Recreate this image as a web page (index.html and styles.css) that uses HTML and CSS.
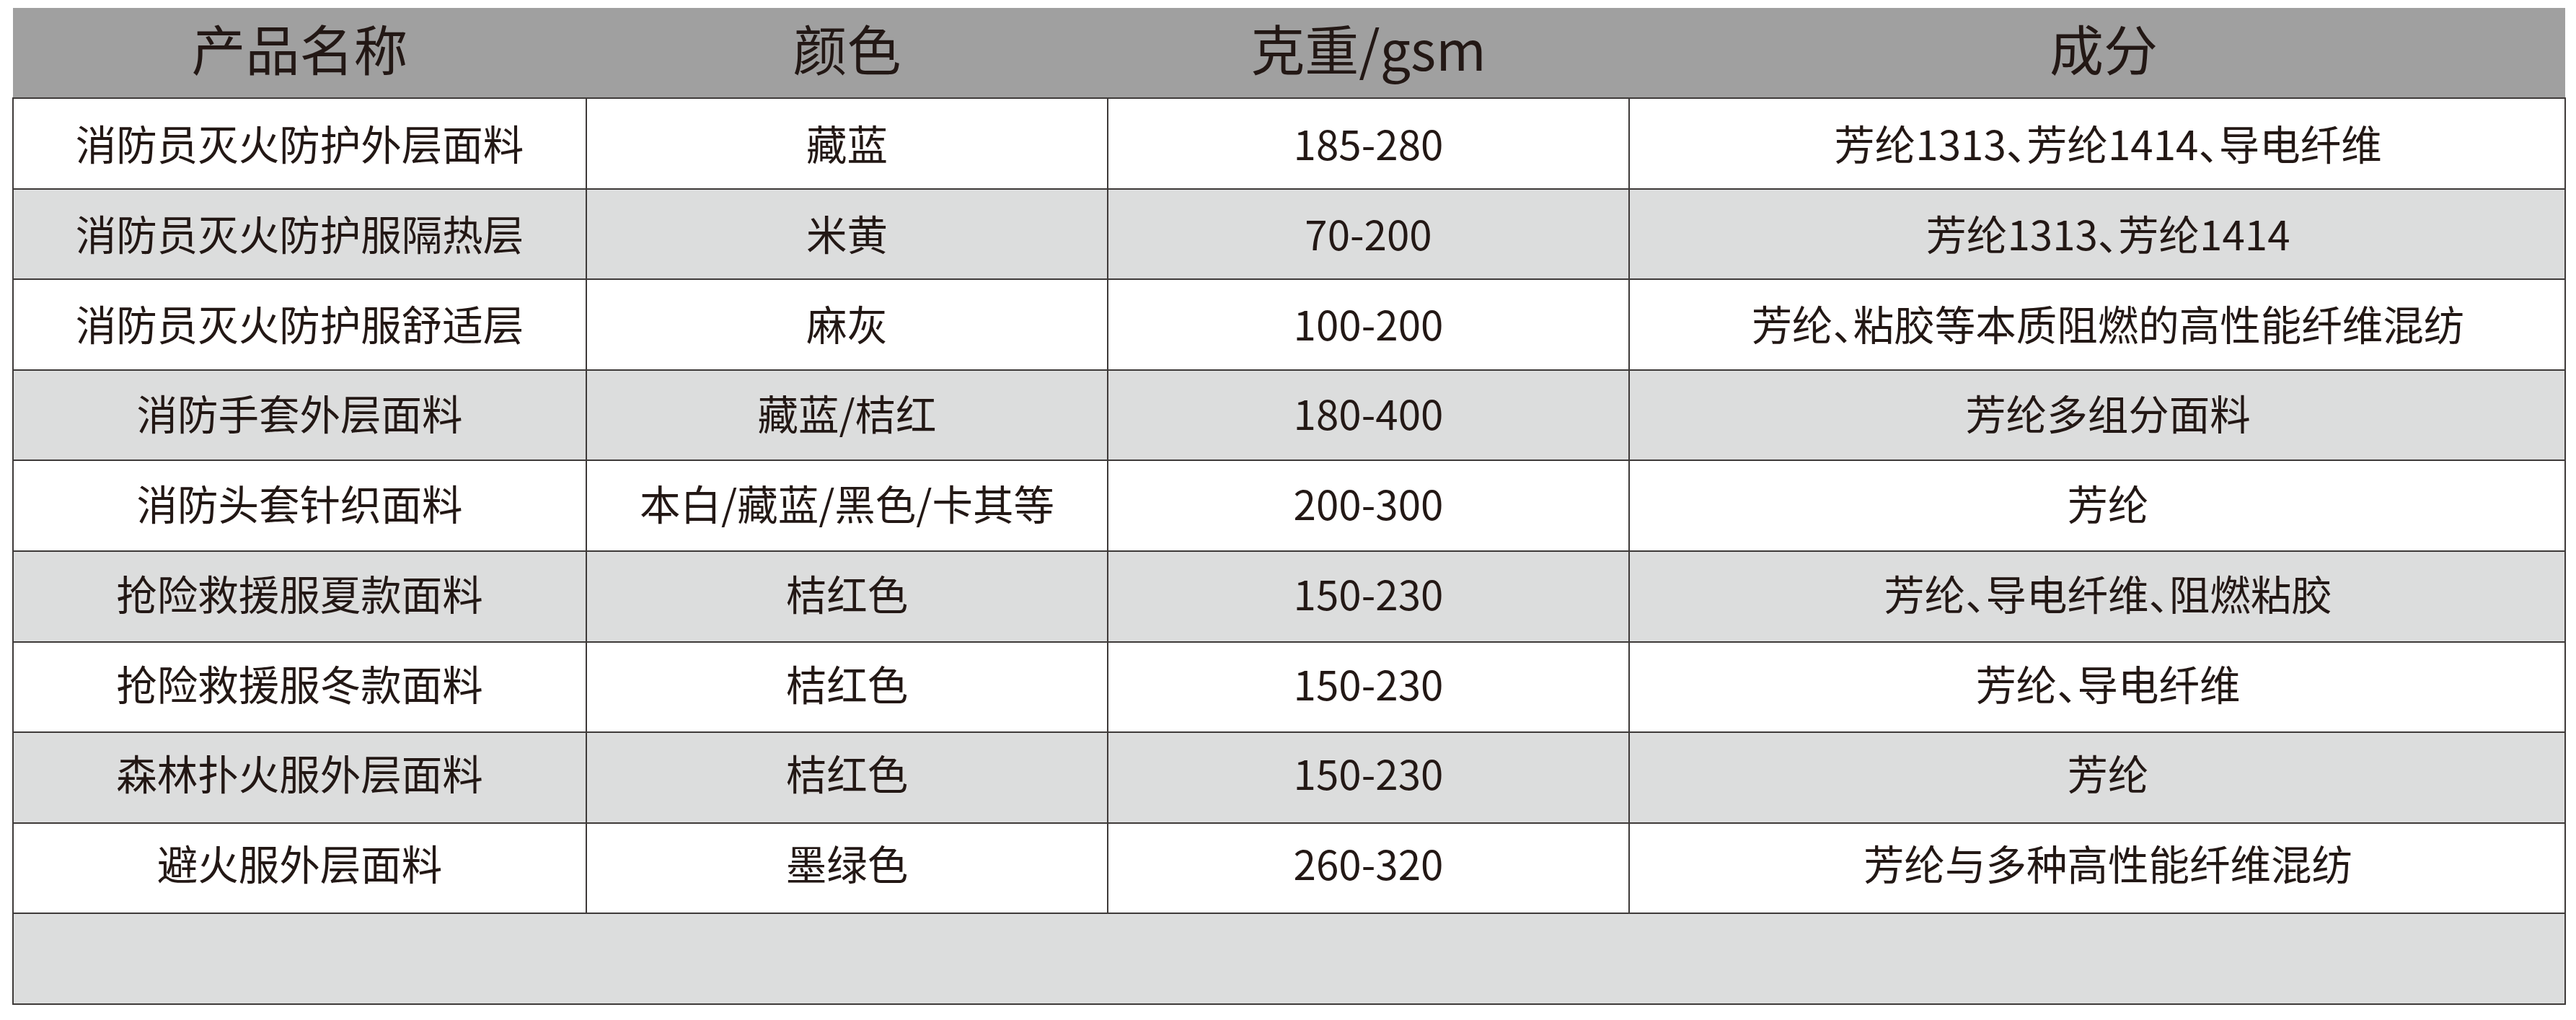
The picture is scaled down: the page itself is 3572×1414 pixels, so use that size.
FILE: index.html
```html
<!DOCTYPE html>
<html lang="zh-CN">
<head>
<meta charset="utf-8">
<title>消防面料</title>
<link rel="stylesheet" href="styles.css">
</head>
<body>
<div class="wrap">
<table class="spec">
<colgroup>
<col class="c1"><col class="c2"><col class="c3"><col class="c4">
</colgroup>
<thead>
<tr><th>产品名称</th><th>颜色</th><th>克重/gsm</th><th>成分</th></tr>
</thead>
<tbody>
<tr><td>消防员灭火防护外层面料</td><td>藏蓝</td><td>185-280</td><td>芳纶1313、芳纶1414、导电纤维</td></tr>
<tr class="alt"><td>消防员灭火防护服隔热层</td><td>米黄</td><td>70-200</td><td>芳纶1313、芳纶1414</td></tr>
<tr><td>消防员灭火防护服舒适层</td><td>麻灰</td><td>100-200</td><td>芳纶、粘胶等本质阻燃的高性能纤维混纺</td></tr>
<tr class="alt"><td>消防手套外层面料</td><td>藏蓝/桔红</td><td>180-400</td><td>芳纶多组分面料</td></tr>
<tr><td>消防头套针织面料</td><td>本白/藏蓝/黑色/卡其等</td><td>200-300</td><td>芳纶</td></tr>
<tr class="alt"><td>抢险救援服夏款面料</td><td>桔红色</td><td>150-230</td><td>芳纶、导电纤维、阻燃粘胶</td></tr>
<tr><td>抢险救援服冬款面料</td><td>桔红色</td><td>150-230</td><td>芳纶、导电纤维</td></tr>
<tr class="alt"><td>森林扑火服外层面料</td><td>桔红色</td><td>150-230</td><td>芳纶</td></tr>
<tr><td>避火服外层面料</td><td>墨绿色</td><td>260-320</td><td>芳纶与多种高性能纤维混纺</td></tr>
<tr class="alt empty"><td colspan="4"></td></tr>
</tbody>
</table>
</div>
</body>
</html>
```

FILE: styles.css
```css
html, body {
  margin: 0;
  padding: 0;
  background: #ffffff;
}
.wrap {
  padding: 11px 16px 0 17px;
}
.spec {
  width: 3539px;
  border-collapse: collapse;
  table-layout: fixed;
  font-family: "Noto Sans CJK SC", "Noto Sans", sans-serif;
  color: #231815;
  font-feature-settings: "halt";
}
.c1 { width: 795px; }
.c2 { width: 723px; }
.c3 { width: 723px; }
.c4 { width: 1298px; }
.spec thead tr {
  height: 125px;
}
.spec th {
  background: #a0a0a0;
  padding: 0 0 16px 0;
  font-size: 75px;
  font-weight: 400;
  line-height: 1;
  text-align: center;
  vertical-align: middle;
  border-bottom: 2px solid #3e3a39;
}
.spec tbody tr {
  height: 125.6px;
}
.spec td {
  padding: 0;
  font-size: 56.5px;
  line-height: 1;
  text-align: center;
  vertical-align: middle;
  border: 2px solid #3e3a39;
  background: #ffffff;
}
.spec th:nth-child(4) {
  padding-left: 18px;
}
.spec td:nth-child(4) {
  padding-left: 30px;
}
.spec tr.alt td {
  background: #dcdddd;
}
.spec tbody tr:nth-child(1) td { padding-bottom: 3px; }
.spec tbody tr:nth-child(2) td { padding-bottom: 5px; }
.spec tbody tr:nth-child(3) td { padding-bottom: 6px; }
.spec tbody tr:nth-child(4) td { padding-bottom: 8px; }
.spec tbody tr:nth-child(5) td { padding-bottom: 10px; }
.spec tbody tr:nth-child(6) td { padding-bottom: 11px; }
.spec tbody tr:nth-child(7) td { padding-bottom: 13px; }
.spec tbody tr:nth-child(8) td { padding-bottom: 15px; }
.spec tbody tr:nth-child(9) td { padding-bottom: 17px; }
```
